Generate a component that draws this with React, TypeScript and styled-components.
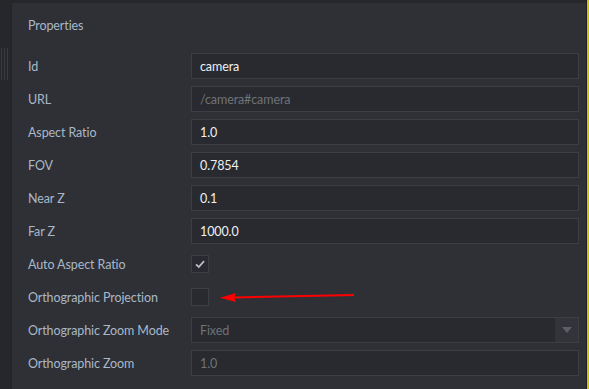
import React from 'react';
import styled, { createGlobalStyle } from 'styled-components';

const GlobalStyle = createGlobalStyle`
  html, body {
    margin: 0;
    padding: 0;
    background: #2e3035;
  }
  body {
    font-family: Lato, "Noto Sans", sans-serif;
    font-size: 12.5px;
    letter-spacing: -0.1px;
  }
`;

type FieldProps = {
  label: string;
  kind: 'text' | 'check' | 'select';
  value?: string;
  disabled?: boolean;
  checked?: boolean;
  arrow?: boolean;
};

const fields: FieldProps[] = [
  { label: 'Id', kind: 'text', value: 'camera' },
  { label: 'URL', kind: 'text', value: '/camera#camera', disabled: true },
  { label: 'Aspect Ratio', kind: 'text', value: '1.0' },
  { label: 'FOV', kind: 'text', value: '0.7854' },
  { label: 'Near Z', kind: 'text', value: '0.1' },
  { label: 'Far Z', kind: 'text', value: '1000.0' },
  { label: 'Auto Aspect Ratio', kind: 'check', checked: true },
  { label: 'Orthographic Projection', kind: 'check', checked: false, arrow: true },
  { label: 'Orthographic Zoom Mode', kind: 'select', value: 'Fixed', disabled: true },
  { label: 'Orthographic Zoom', kind: 'text', value: '1.0', disabled: true },
];

function Field({ label, kind, value, disabled, checked, arrow }: FieldProps) {
  return (
    <Styled.Row>
      <Styled.Label>{label}</Styled.Label>
      {kind === 'text' && <Styled.Input $disabled={disabled}>{value}</Styled.Input>}
      {kind === 'check' && (
        <Styled.CheckCell>
          <Styled.Check>
            {checked && (
              <svg width="12" height="10" viewBox="0 0 12 10">
                <path d="M2 5.4 L4.8 8 L10 2.2" fill="none" stroke="#b9bec6" strokeWidth="1.8" />
              </svg>
            )}
          </Styled.Check>
          {arrow && (
            <Styled.Arrow width="140" height="12" viewBox="0 0 140 12">
              <path d="M14 7.5 L134 5 L134 3 L14 5.5 Z" fill="#ff0000" />
              <path d="M0 6.8 L16 2 L14 6.5 L16 11 Z" fill="#ff0000" />
            </Styled.Arrow>
          )}
        </Styled.CheckCell>
      )}
      {kind === 'select' && (
        <Styled.Select>
          <Styled.SelectValue>{value}</Styled.SelectValue>
          <Styled.SelectButton>
            <svg width="10" height="6" viewBox="0 0 10 6">
              <path d="M0 0 H10 L5 6 Z" fill="#5c5f65" />
            </svg>
          </Styled.SelectButton>
        </Styled.Select>
      )}
    </Styled.Row>
  );
}

export default function App() {
  return (
    <>
      <GlobalStyle />
      <Styled.Frame>
        <Styled.Sidebar>
          <Styled.Grip>
            <span />
            <span />
            <span />
          </Styled.Grip>
        </Styled.Sidebar>
        <Styled.Main>
          <Styled.TopBar />
          <Styled.Panel>
            <Styled.Title>Properties</Styled.Title>
            <Styled.Grid>
              {fields.map((f) => (
                <Field key={f.label} {...f} />
              ))}
            </Styled.Grid>
          </Styled.Panel>
        </Styled.Main>
        <Styled.Edge />
      </Styled.Frame>
    </>
  );
}

const Styled = {
  Frame: styled.div`
    display: flex;
    width: 589px;
    height: 389px;
    overflow: hidden;
    background: #2e3035;
  `,

  Sidebar: styled.div`
    width: 12px;
    flex-shrink: 0;
    background: #25272b;
    border-right: 1px solid #222428;
    padding-top: 48px;
    box-sizing: border-box;
  `,

  Grip: styled.div`
    display: flex;
    gap: 2px;
    padding-left: 1px;

    span {
      display: block;
      width: 1px;
      height: 32px;
      background: #3a3c41;
    }
  `,

  Main: styled.div`
    flex: 1;
    display: flex;
    flex-direction: column;
  `,

  TopBar: styled.div`
    height: 3px;
    background: #25272b;
  `,

  Panel: styled.div`
    flex: 1;
    padding: 0 7px 0 16px;
  `,

  Title: styled.div`
    height: 43px;
    padding-top: 15px;
    box-sizing: border-box;
    color: #a9b8c9;
  `,

  Grid: styled.div`
    display: flex;
    flex-direction: column;
    gap: 7px;
    margin-top: 7px;
  `,

  Row: styled.div`
    display: flex;
    align-items: center;
    height: 26px;
  `,

  Label: styled.div`
    width: 163px;
    flex-shrink: 0;
    color: #a9b8c9;
  `,

  Input: styled.div<{ $disabled?: boolean }>`
    flex: 1;
    height: 26px;
    box-sizing: border-box;
    border: 1px solid #3c3e43;
    background: #282a2f;
    padding: 0 8px;
    display: flex;
    align-items: center;
    color: ${(p) => (p.$disabled ? '#6f7276' : '#eef0f2')};
  `,

  CheckCell: styled.div`
    display: flex;
    align-items: center;
  `,

  Check: styled.div`
    width: 18px;
    height: 18px;
    box-sizing: border-box;
    border: 1px solid #3c3e43;
    background: #282a2f;
    display: flex;
    align-items: center;
    justify-content: center;
  `,

  Arrow: styled.svg`
    margin-left: 11px;
    margin-top: -1px;
  `,

  Select: styled.div`
    flex: 1;
    height: 26px;
    box-sizing: border-box;
    border: 1px solid #3c3e43;
    background: #282a2f;
    display: flex;
  `,

  SelectValue: styled.div`
    flex: 1;
    display: flex;
    align-items: center;
    padding: 0 8px;
    color: #6f7276;
  `,

  SelectButton: styled.div`
    width: 23px;
    background: #32343a;
    display: flex;
    align-items: center;
    justify-content: center;
  `,

  Edge: styled.div`
    width: 3px;
    flex-shrink: 0;
    background: linear-gradient(to right, #1f2124 0 1px, #d4c400 1px 100%);
  `,
};
